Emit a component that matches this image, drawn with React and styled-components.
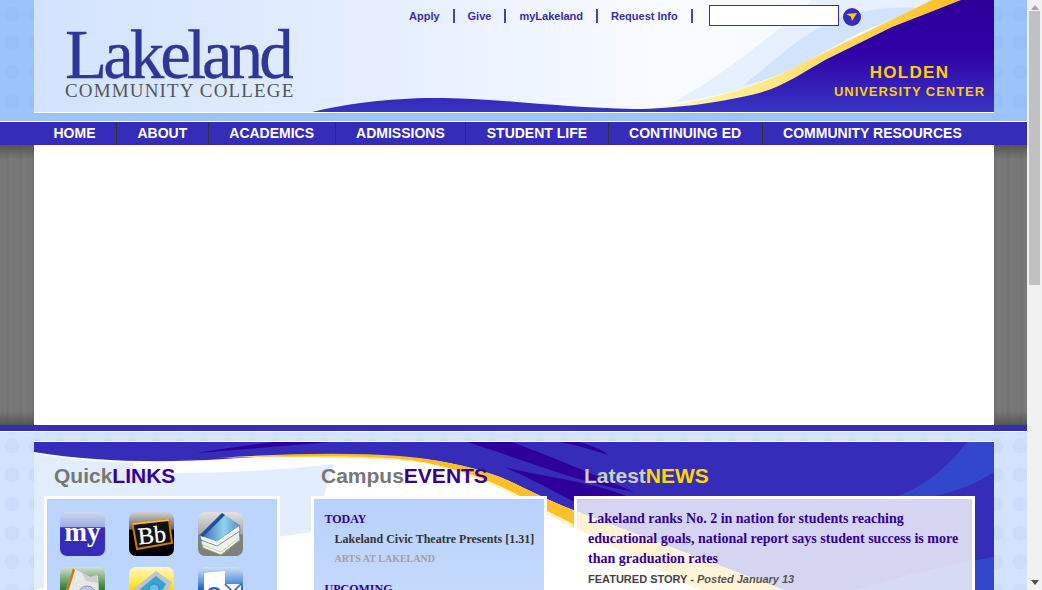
import React from 'react';
import styled, { createGlobalStyle } from 'styled-components';

const GlobalStyle = createGlobalStyle`
  html, body { margin: 0; padding: 0; height: 100%; overflow: hidden; }
  body { font-family: "Liberation Sans", Arial, sans-serif; background: #fff; }
`;

const dots = (tint) => `radial-gradient(circle at 12px 14px, ${tint} 0, ${tint} 7px, transparent 8px)`;

const Shell = styled.div`
  display: flex;
  height: 590px;
  overflow: hidden;
`;

const Page = styled.div`
  width: 1027px;
  flex: none;
`;

const TopBand = styled.div`
  height: 121px;
  padding: 0 33px 0 34px;
  background-color: #9cc4fb;
  background-image: ${dots('#98c0f8')};
  background-size: 24px 29px;
  border-bottom: 1px solid #fff;
`;

const Header = styled.header`
  position: relative;
  height: 112px;
  border-bottom: 1px solid #fff;
  background: linear-gradient(90deg, #d3e3fd 0%, #e4eefe 35%, #f8fbff 65%, #f4f8ff 100%);
  overflow: hidden;
`;

const Art = styled.svg`
  position: absolute;
  left: 0;
  top: 0;
`;

const HeaderInner = styled.div`
  position: relative;
  display: flex;
  flex-direction: column;
  padding-top: 5px;
`;

const UtilityBar = styled.div`
  display: flex;
  align-items: center;
  height: 21px;
  padding-left: 375px;
`;

const UtilityLink = styled.a`
  font-size: 11px;
  font-weight: bold;
  color: #3a2bb5;
  line-height: 22px;
`;

const UtilitySep = styled.span`
  width: 2px;
  height: 14px;
  margin: 0 13px;
  background: #3a45c8;
`;

const SearchInput = styled.input`
  box-sizing: border-box;
  width: 130px;
  height: 21px;
  margin-left: 3px;
  border: 1px solid #352db9;
  background: #fff;
  padding: 0 4px;
`;

const SearchButton = styled.button`
  width: 18px;
  height: 18px;
  margin: 3px 0 0 4px;
  padding: 0;
  border: 0;
  border-radius: 50%;
  background: #352db9;
  display: flex;
  align-items: center;
  justify-content: center;
`;

const BrandRow = styled.div`
  display: flex;
  justify-content: space-between;
  padding: 4px 9px 0 31px;
`;

const Logo = styled.div`
  display: flex;
  flex-direction: column;
  font-family: "Liberation Serif", "Times New Roman", serif;
`;

const LogoName = styled.span`
  font-size: 69px;
  line-height: 50px;
  letter-spacing: -4px;
  color: #2f3699;
  -webkit-text-stroke: 0.3px #2f3699;
`;

const LogoSub = styled.span`
  font-size: 19px;
  line-height: 22px;
  letter-spacing: 1.15px;
  color: #555;
  white-space: nowrap;
`;

const Campus = styled.div`
  display: flex;
  flex-direction: column;
  align-items: center;
  padding-top: 33px;
  font-weight: bold;
  color: #fcd000;
`;

const CampusName = styled.span`
  font-size: 17px;
  line-height: 20px;
  letter-spacing: 1.3px;
`;

const CampusSub = styled.span`
  font-size: 13px;
  line-height: 18px;
  letter-spacing: 0.95px;
`;

const Nav = styled.nav`
  display: flex;
  height: 23px;
  padding-left: 33px;
  background: #352db9;
`;

const NavItem = styled.a`
  padding: 0 20.5px;
  border-right: 1px solid #333;
  font-size: 14px;
  font-weight: bold;
  line-height: 23px;
  color: #fff;
  white-space: nowrap;

  &:last-child {
    border-right: 0;
  }
`;

const Stage = styled.div`
  height: 280px;
  padding: 0 33px 0 34px;
  background:
    linear-gradient(180deg, #555 0, rgba(85, 85, 85, 0) 14px, rgba(85, 85, 85, 0) 266px, #555 280px),
    repeating-linear-gradient(90deg, #777 0, #777 6px, #717171 7px, #7b7b7b 11px, #777 13px);
`;

const Slide = styled.div`
  height: 100%;
  background: #fff;
`;

const StageFoot = styled.div`
  height: 6px;
  background: #352db9;
`;

const LowerBand = styled.div`
  padding: 1px 33px 0 34px;
  background-color: #d3e3fe;
  background-image: ${dots('#ccddfc')};
  background-size: 24px 29px;
  border-top: 1px solid #fff;
`;

const LowerPanel = styled.section`
  position: relative;
  margin-top: 8px;
  height: 148px;
  border-top: 1px solid #fff;
  background: #352db9;
  overflow: hidden;
`;

const Columns = styled.div`
  position: relative;
  display: grid;
  grid-template-columns: 236px 236px 397px;
  column-gap: 31px;
  padding-left: 10px;
`;

const Column = styled.div`
  display: flex;
  flex-direction: column;
  margin-left: ${(p) => p.$pull || 0}px;
`;

const Title = styled.h2`
  margin: 0;
  padding: 22px 0 0 10px;
  height: 32px;
  font-size: 21px;
  line-height: 24px;
  font-weight: bold;
  color: ${(p) => p.$lead};
  white-space: nowrap;

  b {
    color: ${(p) => p.$strong};
  }
`;

const Card = styled.div`
  height: 200px;
  border: 3px solid #fff;
  border-bottom: 0;
  background: ${(p) => p.$bg};
`;

const IconGrid = styled.div`
  display: grid;
  grid-template-columns: repeat(3, 45px);
  column-gap: 24px;
  row-gap: 11px;
  padding: 13px 0 0 13px;
`;

const Tile = styled.svg`
  display: block;
  width: 45px;
  height: 44px;
`;

const Events = styled.div`
  display: flex;
  flex-direction: column;
  padding: 12px 10.5px;
  font-family: "Liberation Serif", "Times New Roman", serif;
  font-weight: bold;
`;

const EventHead = styled.div`
  font-size: 12px;
  line-height: 16px;
  color: #309;
  margin-top: ${(p) => (p.$next ? 12 : 0)}px;
`;

const EventName = styled.div`
  font-size: 12px;
  line-height: 20px;
  margin-top: 2px;
  color: #333;
  padding-left: 10px;
  white-space: nowrap;
`;

const EventTag = styled.div`
  font-size: 10px;
  line-height: 20px;
  color: #a0a0a0;
  padding-left: 10px;
`;

const News = styled.div`
  padding: 10px 11px;
`;

const Headline = styled.div`
  font-family: "Liberation Serif", "Times New Roman", serif;
  font-size: 14px;
  font-weight: bold;
  line-height: 20px;
  color: #309;
`;

const Meta = styled.div`
  font-size: 11px;
  font-weight: bold;
  line-height: 20px;
  color: #444;

  em {
    color: #555;
  }
`;

const Rail = styled.div`
  position: relative;
  width: 15px;
  flex: none;
  background: #f1f1f1;
  display: flex;
  flex-direction: column;
  align-items: center;
`;

const RailUp = styled.span`
  margin-top: 5px;
  border: 4px solid transparent;
  border-top: 0;
  border-bottom: 5px solid #a3a3a3;
`;

const RailThumb = styled.span`
  width: 11px;
  height: 274px;
  margin-top: 1px;
  background: #c1c1c1;
`;

const RailDown = styled.span`
  margin-top: auto;
  margin-bottom: 5px;
  border: 4px solid transparent;
  border-bottom: 0;
  border-top: 5px solid #505050;
`;

const utilityLinks = ['Apply', 'Give', 'myLakeland', 'Request Info'];
const navItems = ['HOME', 'ABOUT', 'ACADEMICS', 'ADMISSIONS', 'STUDENT LIFE', 'CONTINUING ED', 'COMMUNITY RESOURCES'];

const HeaderArt = () => (
  <Art width="960" height="112" viewBox="0 0 960 112">
    <defs>
      <linearGradient id="hdrBlue" x1="0" y1="0" x2="0" y2="1">
        <stop offset="0" stopColor="#2e0099" />
        <stop offset="0.45" stopColor="#3000a5" />
        <stop offset="1" stopColor="#3835c2" />
      </linearGradient>
      <linearGradient id="hdrGold" x1="0" y1="0" x2="1" y2="0">
        <stop offset="0" stopColor="#fffbc0" />
        <stop offset="0.45" stopColor="#ffe680" />
        <stop offset="1" stopColor="#ffbe22" />
      </linearGradient>
    </defs>
    <path d="M640 102 C 690 75, 745 30, 778 0 L 898 0 L 825 33 L 760 68 C 725 85, 680 98, 640 102 Z" fill="#e6f0fe" />
    <path d="M708 86 C 730 70, 760 40, 790 25 C 815 12, 850 6, 885 8 L 825 33 L 760 68 C 745 75, 725 82, 708 86 Z" fill="#d2e4fc" />
    <path d="M600 109 C 640 108, 690 96, 725 83 C 745 76, 760 68, 775 60 L 898 0 L 927 0 L 858 27 L 791 60 C 770 72, 750 86, 725 93 C 690 102, 640 109, 600 109 Z" fill="url(#hdrGold)" />
    <path d="M278 112 C 310 104, 360 97, 410 98 C 470 99, 530 108, 600 109 C 640 109, 690 102, 725 93 C 750 86, 770 72, 791 60 L 858 27 L 927 0 L 960 0 L 960 112 Z" fill="url(#hdrBlue)" />
  </Art>
);

const PanelArt = () => (
  <Art width="960" height="148" viewBox="0 0 960 148">
    <defs>
      <linearGradient id="panelGold" x1="0" y1="0" x2="1" y2="0">
        <stop offset="0" stopColor="#fff" />
        <stop offset="0.12" stopColor="#ffb81c" />
        <stop offset="1" stopColor="#ffc83a" />
      </linearGradient>
    </defs>
    <path d="M0 10 C 60 20, 130 21, 190 17 C 240 13, 310 11, 366 15 C 400 17, 433 23, 466 35 C 490 45, 510 57, 539 68 L 750 148 L 0 148 Z" fill="#fff" />
    <path d="M0 11 C 40 18, 70 20, 100 21 C 95 27, 110 31, 140 31 C 190 31, 240 29, 300 22 C 290 50, 285 80, 278 90 C 200 100, 80 130, 0 148 Z" fill="#e2edfd" />
    <path d="M163 11 C 200 5, 225 2, 240 0 L 296 0 C 250 4, 200 8, 163 11 Z" fill="#2e0099" />
    <path d="M183 16 C 240 12, 310 10, 366 14 C 400 17, 433 23, 466 35 C 490 45, 510 57, 539 68 L 750 148 L 666 148 L 539 85 C 510 70, 490 58, 466 46 C 433 32, 400 20, 366 18 C 310 14, 240 14, 183 16 Z" fill="url(#panelGold)" />
    <path d="M266 15 C 310 14, 340 15, 366 17 C 400 20, 433 30, 466 44 C 490 56, 510 68, 539 82 L 539 85 C 510 70, 490 58, 466 46 C 433 32, 400 20, 366 18 C 330 15, 300 15, 266 15 Z" fill="#fffbc0" />
    <path d="M433 0 L 478 0 C 510 12, 550 28, 600 50 C 540 40, 480 14, 433 0 Z" fill="#2e0099" />
    <path d="M526 0 L 545 0 C 560 4, 570 9, 574 13 C 560 8, 545 4, 526 0 Z" fill="#2e0099" />
    <path d="M470 25 C 510 35, 560 40, 595 55 L 541 60 C 520 50, 495 35, 470 25 Z" fill="#2e0099" />
    <path d="M960 0 L 933 0 C 915 25, 880 55, 840 60 C 890 60, 930 50, 960 30 Z" fill="#3247cc" />
    <path d="M960 115 C 900 125, 850 140, 820 148 L 960 148 Z" fill="#3247cc" />
  </Art>
);

const TileDefs = () => (
  <defs>
    <linearGradient id="tileSky" x1="0" y1="0" x2="0" y2="1">
      <stop offset="0" stopColor="#cdd8f2" />
      <stop offset="0.33" stopColor="#a0aee0" />
      <stop offset="0.36" stopColor="#352db9" />
      <stop offset="1" stopColor="#352db9" />
    </linearGradient>
    <linearGradient id="tileInk" x1="0" y1="0" x2="0" y2="1">
      <stop offset="0" stopColor="#d0d0d0" />
      <stop offset="0.38" stopColor="#666" />
      <stop offset="0.42" stopColor="#000" />
      <stop offset="1" stopColor="#000" />
    </linearGradient>
    <linearGradient id="tileGrey" x1="0" y1="0" x2="0" y2="1">
      <stop offset="0" stopColor="#e2e2e2" />
      <stop offset="0.5" stopColor="#a6a6a6" />
      <stop offset="0.52" stopColor="#808080" />
      <stop offset="1" stopColor="#808080" />
    </linearGradient>
    <linearGradient id="tileGreen" x1="0" y1="0" x2="0" y2="1">
      <stop offset="0" stopColor="#d4e0d0" />
      <stop offset="0.4" stopColor="#4f9050" />
      <stop offset="0.6" stopColor="#1e6a22" />
    </linearGradient>
    <linearGradient id="tileYellow" x1="0" y1="0" x2="0" y2="1">
      <stop offset="0" stopColor="#fff9c8" />
      <stop offset="0.35" stopColor="#ffe84a" />
      <stop offset="0.5" stopColor="#ffd800" />
    </linearGradient>
    <linearGradient id="tileBlue" x1="0" y1="0" x2="0" y2="1">
      <stop offset="0" stopColor="#cfe0f6" />
      <stop offset="0.35" stopColor="#5a93dc" />
      <stop offset="0.5" stopColor="#1f62c4" />
    </linearGradient>
    <linearGradient id="bookCover" x1="0" y1="0" x2="1" y2="0">
      <stop offset="0" stopColor="#2f5fb0" />
      <stop offset="0.6" stopColor="#8fd3ee" />
      <stop offset="1" stopColor="#4f8fd0" />
    </linearGradient>
  </defs>
);

const MyIcon = () => (
  <Tile viewBox="0 0 45 44">
    <TileDefs />
    <rect width="45" height="44" rx="7" fill="url(#tileSky)" />
    <text x="22.5" y="29" textAnchor="middle" fontFamily="Liberation Serif, serif" fontSize="27" fontWeight="bold" fill="#fff">my</text>
  </Tile>
);

const BbIcon = () => (
  <Tile viewBox="0 0 45 44">
    <rect width="45" height="44" rx="7" fill="url(#tileInk)" />
    <path d="M3.5 12 L 40 8 L 43 31 L 8 37 Z" fill="#111" stroke="#c87a10" strokeWidth="2" />
    <path d="M3.5 12 L 40 8" stroke="#ffc21a" strokeWidth="1.4" />
    <text x="23" y="31" textAnchor="middle" fontFamily="Liberation Serif, serif" fontSize="24" fill="#fff" stroke="#fff" strokeWidth="0.3" transform="rotate(-6 23 24)">Bb</text>
  </Tile>
);

const BooksIcon = () => (
  <Tile viewBox="0 0 45 44">
    <rect width="45" height="44" rx="7" fill="url(#tileGrey)" />
    <path d="M3 29 L 41 18 L 42 28 L 23 43 L 5 36 Z" fill="#eef2e8" stroke="#7aa85a" strokeWidth="1" />
    <path d="M5 33 L 23 40 L 42 25" fill="none" stroke="#b8c8a8" strokeWidth="0.8" />
    <path d="M2 23 L 19 29 L 41.5 13 L 42 19 L 19 34 L 3 28 Z" fill="#f3f3f3" stroke="#3a6fb0" strokeWidth="0.7" />
    <path d="M2 23 L 24 1 L 41.5 13 L 19 29 Z" fill="url(#bookCover)" />
    <path d="M2 23 L 24 1 L 27 3 L 5 25 Z" fill="#1f4fa0" />
  </Tile>
);

const LibraryIcon = () => (
  <Tile viewBox="0 0 45 44">
    <rect width="45" height="44" rx="7" fill="url(#tileGreen)" />
    <path d="M4 30 L 13 1 L 30 10 L 38 9 L 40 44 L 10 44 Z" fill="#e8e8e8" />
    <path d="M13 1 L 4 30 L 6 32 L 15 3 Z" fill="#c87a10" />
    <path d="M22 6 L 30 10 L 37 8 L 38 16 L 26 14 Z" fill="#cfcfcf" />
    <circle cx="27" cy="28" r="9" fill="#b9c9f0" stroke="#8a98c0" />
  </Tile>
);

const MailIcon = () => (
  <Tile viewBox="0 0 45 44">
    <rect width="45" height="44" rx="7" fill="url(#tileYellow)" />
    <path d="M4 22 L 27 4 L 43 15 L 30 44 L 10 44 Z" fill="#c4c4c4" />
    <path d="M11 22 L 27 9 L 37 17 L 27 34 Z" fill="#3aa3d6" />
    <circle cx="25" cy="22" r="5" fill="#5fc0ea" stroke="#2b86b8" />
  </Tile>
);

const OutlookIcon = () => (
  <Tile viewBox="0 0 45 44">
    <rect width="45" height="44" rx="7" fill="url(#tileBlue)" />
    <path d="M6 6 L 27 4 L 27 44 L 6 44 Z" fill="#fff" />
    <rect x="27" y="17" width="16" height="14" fill="#fff" />
    <path d="M27 17 L 35 25 L 43 17" fill="none" stroke="#1f62c4" strokeWidth="1.6" />
    <text x="16" y="34" textAnchor="middle" fontFamily="Liberation Sans, sans-serif" fontSize="20" fontWeight="bold" fill="#1f62c4">O</text>
  </Tile>
);

export default function App() {
  return (
    <>
      <GlobalStyle />
      <Shell>
        <Page>
          <TopBand>
            <Header>
              <HeaderArt />
              <HeaderInner>
                <UtilityBar>
                  {utilityLinks.map((label) => (
                    <React.Fragment key={label}>
                      <UtilityLink>{label}</UtilityLink>
                      <UtilitySep />
                    </React.Fragment>
                  ))}
                  <SearchInput type="text" />
                  <SearchButton aria-label="Search">
                    <svg width="11" height="8" viewBox="0 0 11 8">
                      <path d="M0 1 L 11 0 L 6 8 L 4.8 3.5 Z" fill="#fc0" />
                    </svg>
                  </SearchButton>
                </UtilityBar>
                <BrandRow>
                  <Logo>
                    <LogoName>Lakeland</LogoName>
                    <LogoSub>COMMUNITY COLLEGE</LogoSub>
                  </Logo>
                  <Campus>
                    <CampusName>HOLDEN</CampusName>
                    <CampusSub>UNIVERSITY CENTER</CampusSub>
                  </Campus>
                </BrandRow>
              </HeaderInner>
            </Header>
          </TopBand>
          <Nav>
            {navItems.map((item) => (
              <NavItem key={item}>{item}</NavItem>
            ))}
          </Nav>
          <Stage>
            <Slide />
          </Stage>
          <StageFoot />
          <LowerBand>
            <LowerPanel>
              <PanelArt />
              <Columns>
                <Column>
                  <Title $lead="#777" $strong="#309">Quick<b>LINKS</b></Title>
                  <Card $bg="#bcd5fc">
                    <IconGrid>
                      <MyIcon />
                      <BbIcon />
                      <BooksIcon />
                      <LibraryIcon />
                      <MailIcon />
                      <OutlookIcon />
                    </IconGrid>
                  </Card>
                </Column>
                <Column>
                  <Title $lead="#777" $strong="#309">Campus<b>EVENTS</b></Title>
                  <Card $bg="linear-gradient(180deg, #b9d2fb, #d0e2fe)">
                    <Events>
                      <EventHead>TODAY</EventHead>
                      <EventName>Lakeland Civic Theatre Presents [1.31]</EventName>
                      <EventTag>ARTS AT LAKELAND</EventTag>
                      <EventHead $next>UPCOMING</EventHead>
                    </Events>
                  </Card>
                </Column>
                <Column $pull={-4}>
                  <Title $lead="#ccc" $strong="#ffd700">Latest<b>NEWS</b></Title>
                  <Card $bg="rgba(255, 255, 255, 0.8)">
                    <News>
                      <Headline>Lakeland ranks No. 2 in nation for students reaching educational goals, national report says student success is more than graduation rates</Headline>
                      <Meta>FEATURED STORY - <em>Posted January 13</em></Meta>
                    </News>
                  </Card>
                </Column>
              </Columns>
            </LowerPanel>
          </LowerBand>
        </Page>
        <Rail>
          <RailUp />
          <RailThumb />
          <RailDown />
        </Rail>
      </Shell>
    </>
  );
}
